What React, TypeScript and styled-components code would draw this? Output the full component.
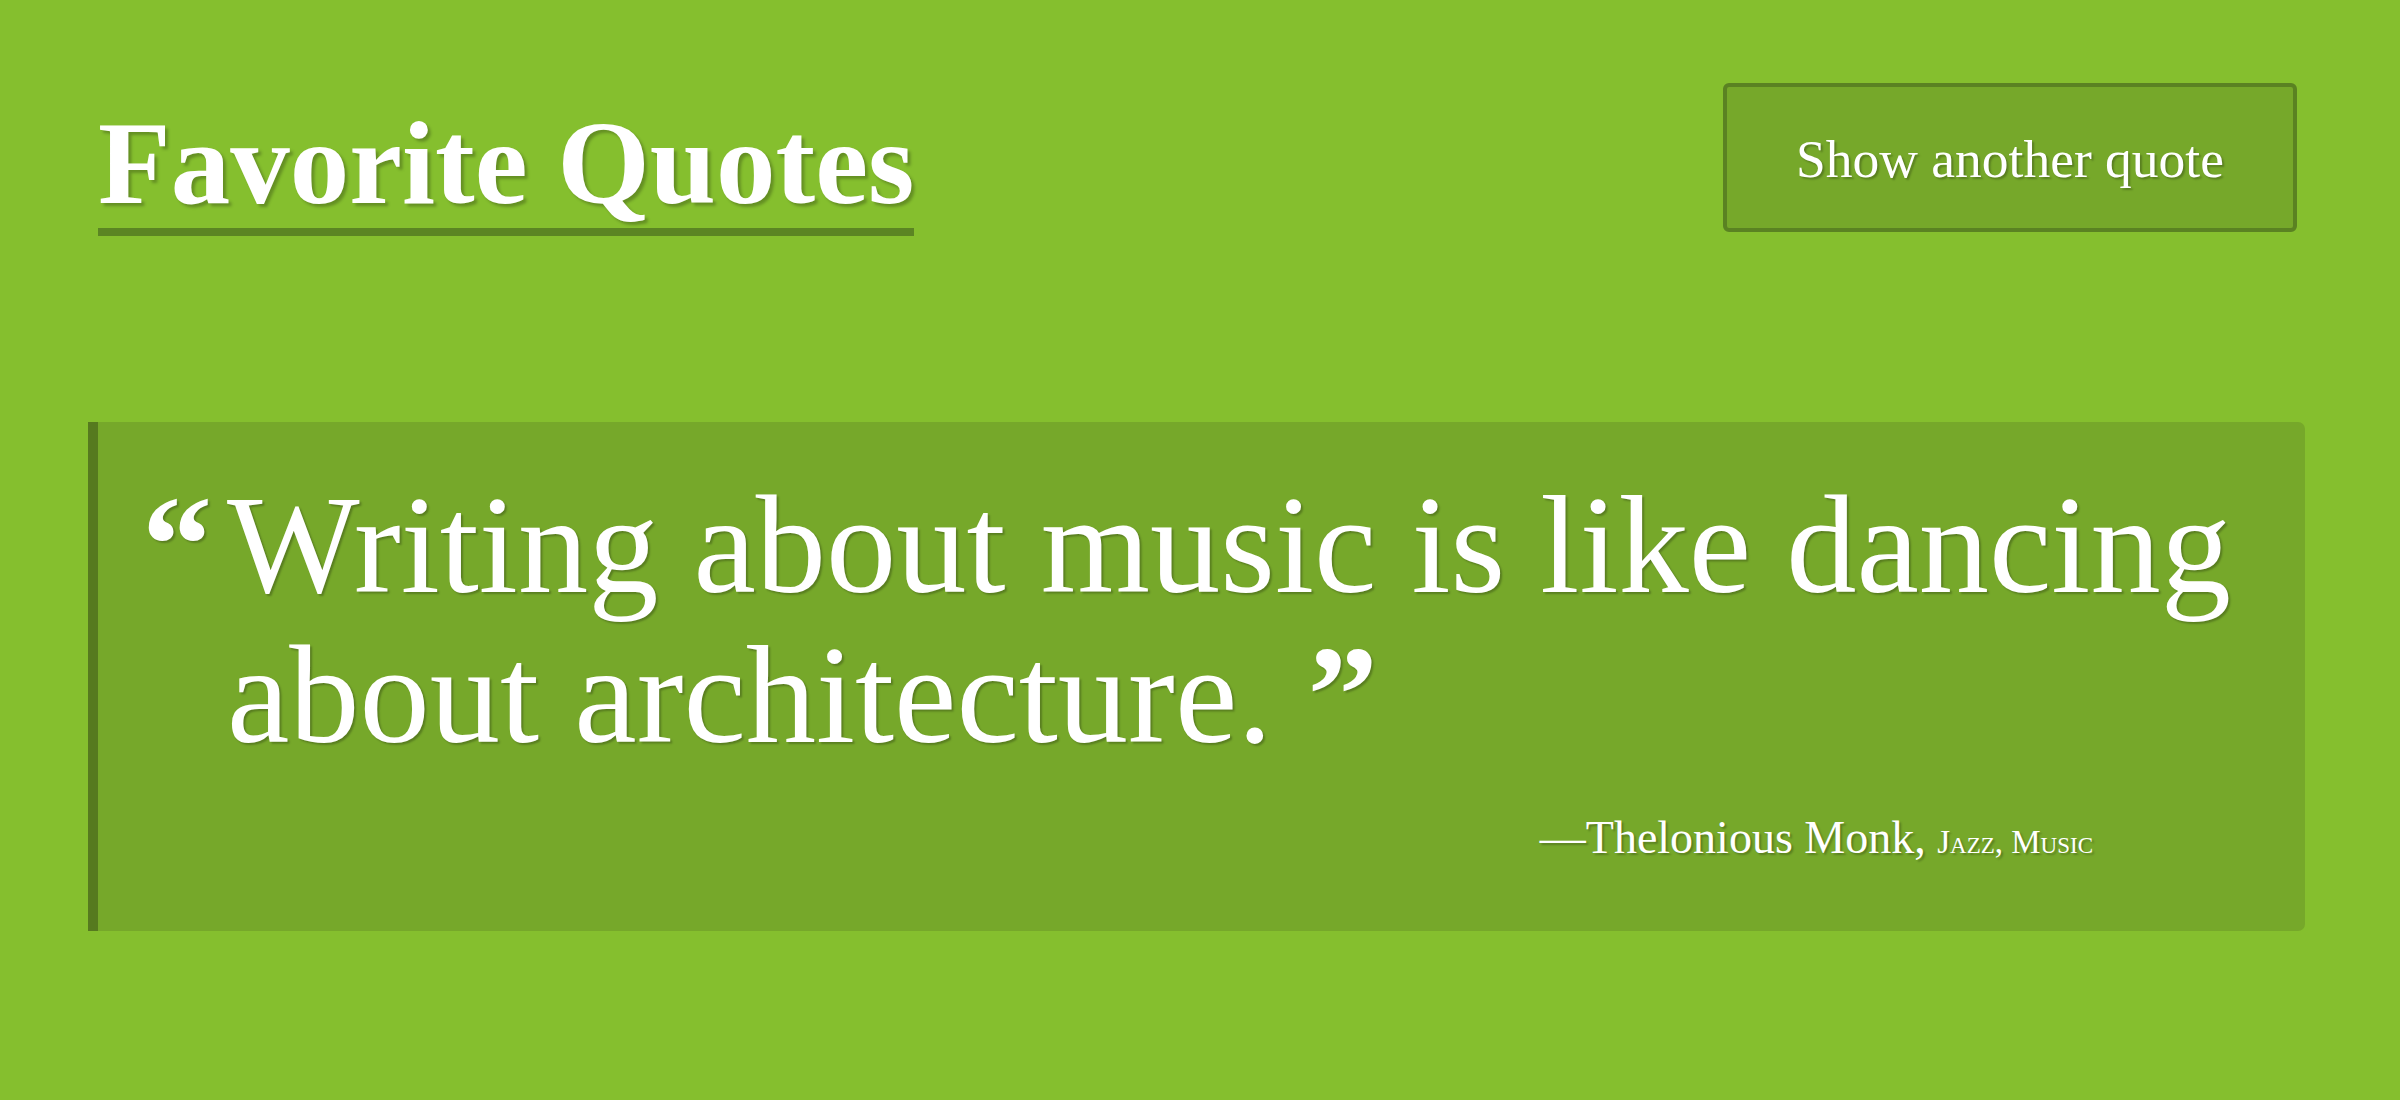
import styled, { createGlobalStyle } from 'styled-components';

const GlobalStyle = createGlobalStyle`
  html, body {
    margin: 0;
    padding: 0;
    background: #85bf2e;
  }
  body {
    min-height: 1100px;
    font-family: "Liberation Serif", "Times New Roman", serif;
    color: #fff;
  }
`;

const Page = styled.main`
  padding: 0 95px 0 88px;
`;

const Header = styled.header`
  display: flex;
  justify-content: space-between;
  align-items: flex-start;
  padding: 83px 8px 0 10px;
`;

const Title = styled.h1`
  margin: 21px 0 0;
  padding-bottom: 5px;
  font-size: 119px;
  line-height: 1;
  font-weight: 700;
  border-bottom: 8px solid #5b8523;
  text-shadow: 3px 3px 3px rgba(0, 0, 0, 0.25);
`;

const NextButton = styled.button`
  box-sizing: border-box;
  width: 574px;
  height: 149px;
  padding: 46px 0 41px;
  background: #76a82a;
  border: 4px solid #5a8222;
  border-radius: 6px;
  color: #fff;
  font-family: inherit;
  font-size: 53.5px;
  line-height: 1;
  text-align: center;
  text-shadow: 2px 2px 2px rgba(0, 0, 0, 0.25);
  cursor: pointer;
`;

const QuoteBox = styled.blockquote`
  margin: 186px 0 0;
  padding: 48px 60px 61px 129px;
  background: #76a82a;
  border-left: 10px solid #567a1f;
  border-radius: 0 7px 7px 0;
`;

const QuoteText = styled.p`
  margin: 0;
  font-size: 140.5px;
  line-height: 150px;
  text-shadow: 2px 2px 2px rgba(0, 0, 0, 0.25);
`;

// quote marks are bold; the opening one hangs into the left padding
const Mark = styled.span<{ $open?: boolean }>`
  font-weight: 700;
  ${(p) =>
    p.$open &&
    `
    display: inline-block;
    width: 85px;
    margin-left: -85px;
  `}
`;

const Attribution = styled.footer`
  margin-top: 40px;
  padding-right: 152px;
  text-align: right;
  font-size: 46px;
  line-height: 55px;
  text-shadow: 2px 2px 2px rgba(0, 0, 0, 0.25);
`;

const Tags = styled.span`
  font-size: 33px;
  font-variant: small-caps;
`;

const App = () => (
  <>
    <GlobalStyle />
    <Page>
      <Header>
        <Title>Favorite Quotes</Title>
        <NextButton>Show another quote</NextButton>
      </Header>
      <QuoteBox>
        <QuoteText>
          <Mark $open>“</Mark>Writing about music is like dancing about architecture. <Mark>”</Mark>
        </QuoteText>
        <Attribution>
          —Thelonious Monk, <Tags>Jazz, Music</Tags>
        </Attribution>
      </QuoteBox>
    </Page>
  </>
);

export default App;
